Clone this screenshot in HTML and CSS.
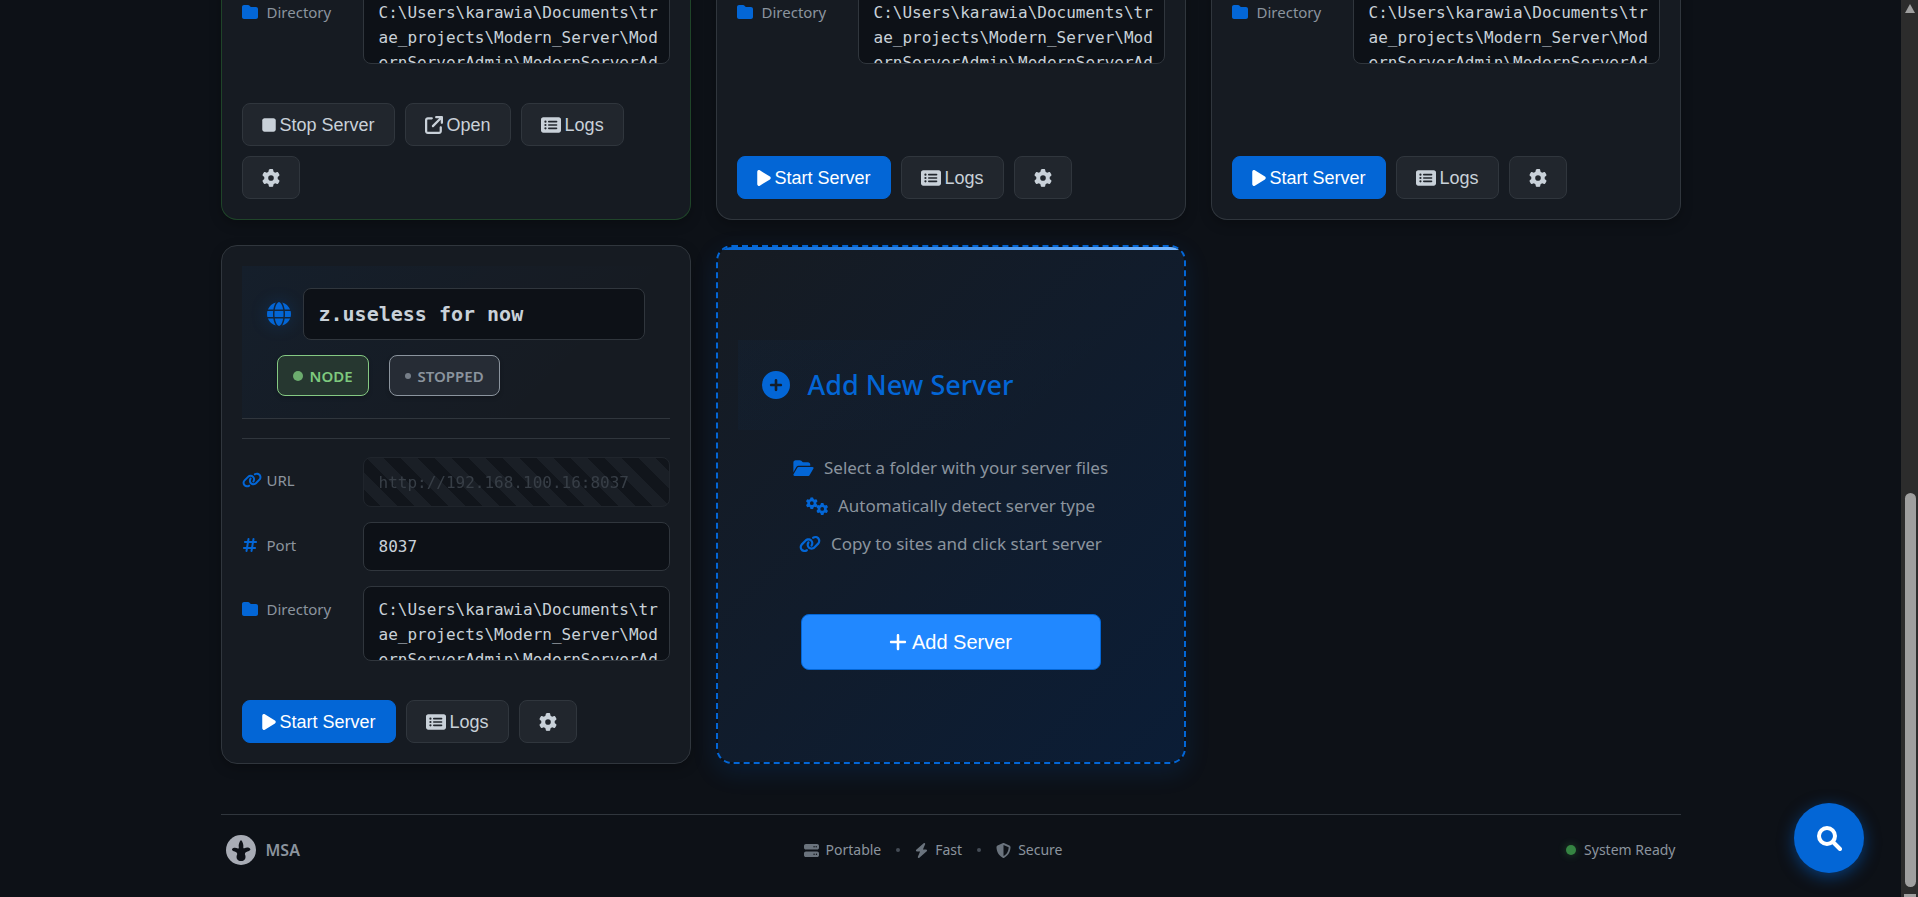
FILE: index.html
```html
<!DOCTYPE html>
<html lang="en">
<head>
<meta charset="utf-8">
<meta name="viewport" content="width=device-width, initial-scale=1">
<title>MSA</title>
<link rel="stylesheet" href="styles.css">
</head>
<body>
<svg class="sprite" aria-hidden="true">
  <symbol id="folder" viewBox="0 0 512 512"><path d="M64 480H448c35.300 0 64-28.700 64-64V160c0-35.300-28.700-64-64-64H288c-10.100 0-19.600-4.700-25.600-12.800L243.200 57.600C231.100 41.500 212.100 32 192 32H64C28.700 32 0 60.700 0 96V416c0 35.300 28.700 64 64 64z"/></symbol>
  <symbol id="folder-open" viewBox="0 0 576 512"><path d="M88.700 223.800L0 375.800V96C0 60.700 28.700 32 64 32H181.500c17 0 33.300 6.700 45.300 18.700l26.500 26.500c12 12 28.300 18.700 45.300 18.700H416c35.300 0 64 28.700 64 64v32H144c-22.800 0-43.800 12.100-55.300 31.800zm27.600 16.100C122.100 230 132.600 224 144 224H544c11.500 0 22 6.100 27.700 16.100s5.700 22.200-.1 32.100l-112 192C453.900 474 443.400 480 432 480H32c-11.500 0-22-6.100-27.700-16.100s-5.700-22.200 .1-32.100l112-192z"/></symbol>
  <symbol id="stop" viewBox="0 0 384 512"><path d="M0 128C0 92.700 28.700 64 64 64H320c35.300 0 64 28.700 64 64V384c0 35.300-28.700 64-64 64H64c-35.300 0-64-28.700-64-64V128z"/></symbol>
  <symbol id="play" viewBox="0 0 384 512"><path d="M73 39c-14.800-9.100-33.400-9.400-48.500-.9S0 62.600 0 80V432c0 17.400 9.400 33.400 24.500 41.900s33.700 8.100 48.500-.9L361 297c14.300-8.700 23-24.200 23-41s-8.700-32.200-23-41L73 39z"/></symbol>
  <symbol id="open" viewBox="0 0 512 512"><path d="M320 0c-17.700 0-32 14.300-32 32s14.300 32 32 32h82.700L201.400 265.400c-12.500 12.500-12.500 32.800 0 45.300s32.800 12.500 45.300 0L448 109.300V192c0 17.700 14.300 32 32 32s32-14.300 32-32V32c0-17.700-14.300-32-32-32H320zM80 32C35.800 32 0 67.800 0 112V432c0 44.200 35.800 80 80 80H400c44.200 0 80-35.800 80-80V320c0-17.700-14.300-32-32-32s-32 14.300-32 32V432c0 8.800-7.200 16-16 16H80c-8.800 0-16-7.200-16-16V112c0-8.800 7.200-16 16-16H192c17.700 0 32-14.300 32-32s-14.300-32-32-32H80z"/></symbol>
  <symbol id="logs" viewBox="0 0 576 512"><path d="M0 96C0 60.700 28.700 32 64 32H512c35.300 0 64 28.700 64 64V416c0 35.300-28.700 64-64 64H64c-35.300 0-64-28.700-64-64V96zM128 288a32 32 0 1 0 0-64 32 32 0 1 0 0 64zm32-128a32 32 0 1 0-64 0 32 32 0 1 0 64 0zM128 384a32 32 0 1 0 0-64 32 32 0 1 0 0 64zm96-248c-13.300 0-24 10.700-24 24s10.700 24 24 24H448c13.300 0 24-10.700 24-24s-10.700-24-24-24H224zm0 96c-13.300 0-24 10.700-24 24s10.700 24 24 24H448c13.300 0 24-10.700 24-24s-10.700-24-24-24H224zm0 96c-13.300 0-24 10.700-24 24s10.700 24 24 24H448c13.300 0 24-10.700 24-24s-10.700-24-24-24H224z"/></symbol>
  <symbol id="gear" viewBox="0 0 512 512"><path d="M495.900 166.600c3.200 8.700 .5 18.400-6.400 24.600l-43.300 39.400c1.100 8.300 1.700 16.800 1.700 25.400s-.6 17.100-1.700 25.400l43.300 39.400c6.900 6.200 9.600 15.900 6.400 24.600c-4.400 11.900-9.700 23.300-15.800 34.300l-4.700 8.100c-6.600 11-14 21.400-22.100 31.200c-5.900 7.200-15.700 9.600-24.500 6.800l-55.700-17.700c-13.400 10.300-28.200 18.900-44 25.400l-12.500 57.100c-2 9.100-9 16.300-18.200 17.800c-13.800 2.300-28 3.500-42.500 3.500s-28.700-1.200-42.500-3.500c-9.200-1.500-16.200-8.700-18.200-17.800l-12.500-57.100c-15.800-6.500-30.600-15.100-44-25.400L83.100 425.900c-8.800 2.800-18.600 .3-24.500-6.800c-8.100-9.800-15.500-20.200-22.100-31.200l-4.700-8.100c-6.100-11-11.400-22.400-15.800-34.300c-3.200-8.700-.5-18.400 6.400-24.600l43.300-39.400C64.600 273.100 64 264.600 64 256s.6-17.100 1.700-25.400L22.400 191.200c-6.900-6.200-9.600-15.900-6.400-24.600c4.400-11.900 9.700-23.300 15.800-34.300l4.700-8.100c6.600-11 14-21.400 22.100-31.200c5.900-7.200 15.700-9.600 24.500-6.800l55.700 17.700c13.400-10.300 28.200-18.900 44-25.400l12.500-57.100c2-9.100 9-16.300 18.200-17.800C227.300 1.200 241.500 0 256 0s28.700 1.200 42.500 3.500c9.200 1.500 16.200 8.700 18.200 17.800l12.500 57.100c15.800 6.500 30.600 15.100 44 25.400l55.700-17.700c8.800-2.800 18.600-.3 24.500 6.800c8.100 9.800 15.500 20.200 22.100 31.200l4.700 8.100c6.100 11 11.400 22.400 15.800 34.300zM256 336a80 80 0 1 0 0-160 80 80 0 1 0 0 160z"/></symbol>
  <symbol id="gears" viewBox="0 0 640 512"><use href="#gear" x="-6" y="0" width="350" height="350"/><use href="#gear" x="296" y="168" width="350" height="350"/></symbol>
  <symbol id="link" viewBox="0 0 640 512"><path d="M579.800 267.700c56.500-56.500 56.500-148 0-204.500c-50-50-128.800-56.500-186.300-15.400l-1.600 1.100c-14.400 10.300-17.700 30.300-7.400 44.600s30.300 17.700 44.600 7.400l1.600-1.100c32.100-22.900 76-19.300 103.800 8.600c31.500 31.500 31.500 82.500 0 114L422.300 334.800c-31.500 31.500-82.500 31.500-114 0c-27.900-27.900-31.500-71.800-8.600-103.800l1.100-1.600c10.300-14.400 6.900-34.400-7.400-44.600s-34.400-6.900-44.600 7.400l-1.100 1.600C206.500 251.200 213 330 263 380c56.500 56.500 148 56.500 204.500 0L579.800 267.700zM60.200 244.300c-56.500 56.500-56.500 148 0 204.500c50 50 128.800 56.500 186.300 15.400l1.600-1.100c14.400-10.300 17.700-30.300 7.400-44.600s-30.300-17.700-44.600-7.400l-1.600 1.100c-32.100 22.900-76 19.300-103.800-8.600C74 372 74 321 105.500 289.500L217.700 177.200c31.500-31.500 82.500-31.500 114 0c27.900 27.900 31.500 71.800 8.600 103.900l-1.100 1.600c-10.300 14.400-6.900 34.400 7.400 44.600s34.400 6.900 44.600-7.400l1.100-1.600C433.500 260.800 427 182 377 132c-56.500-56.500-148-56.500-204.500 0L60.200 244.300z"/></symbol>
  <symbol id="hash" viewBox="-32 0 512 512"><path d="M181.300 32.400c17.400 2.900 29.200 19.400 26.300 36.800L197.800 128h95.100l11.500-69.300c2.900-17.400 19.400-29.200 36.800-26.300s29.200 19.400 26.300 36.800L357.800 128H416c17.700 0 32 14.300 32 32s-14.300 32-32 32H347.100L325.800 320H384c17.700 0 32 14.300 32 32s-14.300 32-32 32H315.100l-11.500 69.300c-2.900 17.400-19.400 29.200-36.800 26.300s-29.200-19.400-26.300-36.800l9.800-58.700H155.100l-11.500 69.300c-2.900 17.400-19.400 29.200-36.800 26.300s-29.200-19.400-26.300-36.800L90.200 384H32c-17.700 0-32-14.300-32-32s14.300-32 32-32h68.900l21.300-128H64c-17.700 0-32-14.300-32-32s14.300-32 32-32h68.900l11.500-69.300c2.900-17.400 19.400-29.200 36.800-26.300zM187.100 192L165.800 320h95.100l21.300-128H187.100z"/></symbol>
  <symbol id="globe" viewBox="0 0 512 512"><path d="M352 256c0 22.200-1.200 43.600-3.300 64H163.300c-2.200-20.400-3.300-41.800-3.300-64s1.200-43.600 3.300-64H348.700c2.200 20.400 3.300 41.800 3.300 64zm28.800-64H503.900c5.300 20.500 8.100 41.900 8.100 64s-2.800 43.500-8.100 64H380.800c2.100-20.600 3.200-42 3.200-64s-1.100-43.400-3.200-64zm112.600-32H376.700c-10-63.900-29.800-117.400-55.300-151.600c78.300 20.700 142 77.500 171.900 151.600zm-149.100 0H167.700c6.100-36.400 15.500-68.600 27-94.700c10.500-23.600 22.200-40.700 33.500-51.500C239.400 3.200 248.700 0 256 0s16.600 3.200 27.800 13.800c11.300 10.800 23 27.900 33.500 51.500c11.600 26 20.900 58.200 27 94.700zm-209 0H18.600C48.600 85.900 112.200 29.100 190.600 8.400C165.100 42.600 145.300 96.100 135.300 160zM8.100 192H131.200c-2.100 20.600-3.200 42-3.200 64s1.100 43.400 3.200 64H8.100C2.800 299.500 0 278.100 0 256s2.800-43.500 8.100-64zM194.700 446.600c-11.600-26-20.900-58.200-27-94.600H344.300c-6.100 36.400-15.500 68.600-27 94.600c-10.500 23.600-22.200 40.700-33.500 51.500C272.600 508.800 263.300 512 256 512s-16.600-3.200-27.800-13.800c-11.300-10.800-23-27.900-33.500-51.500zM135.300 352c10 63.900 29.800 117.400 55.300 151.600C112.200 482.900 48.600 426.100 18.600 352H135.300zm358.100 0c-30 74.100-93.600 130.900-171.900 151.600c25.500-34.200 45.200-87.700 55.300-151.600H493.400z"/></symbol>
  <symbol id="plus-circle" viewBox="0 0 512 512"><path d="M256 512A256 256 0 1 0 256 0a256 256 0 1 0 0 512zM232 344V280H168c-13.300 0-24-10.700-24-24s10.700-24 24-24h64V168c0-13.300 10.700-24 24-24s24 10.700 24 24v64h64c13.300 0 24 10.700 24 24s-10.700 24-24 24H280v64c0 13.300-10.700 24-24 24s-24-10.700-24-24z"/></symbol>
  <symbol id="plus" viewBox="0 0 448 512"><path d="M256 80c0-17.700-14.300-32-32-32s-32 14.300-32 32V224H48c-17.700 0-32 14.300-32 32s14.300 32 32 32H192V432c0 17.700 14.300 32 32 32s32-14.300 32-32V288H400c17.700 0 32-14.300 32-32s-14.300-32-32-32H256V80z"/></symbol>
  <symbol id="server" viewBox="0 0 512 512"><path d="M64 32C28.700 32 0 60.700 0 96v64c0 35.300 28.700 64 64 64H448c35.300 0 64-28.700 64-64V96c0-35.300-28.700-64-64-64H64zm280 72a24 24 0 1 1 0 48 24 24 0 1 1 0-48zm48 24a24 24 0 1 1 48 0 24 24 0 1 1-48 0zM64 288c-35.300 0-64 28.700-64 64v64c0 35.300 28.700 64 64 64H448c35.300 0 64-28.700 64-64V352c0-35.300-28.700-64-64-64H64zm280 72a24 24 0 1 1 0 48 24 24 0 1 1 0-48zm56 24a24 24 0 1 1 48 0 24 24 0 1 1-48 0z"/></symbol>
  <symbol id="bolt" viewBox="0 0 448 512"><path d="M349.400 44.600c5.900-13.700 1.500-29.700-10.600-38.500s-28.600-8-39.900 1.800l-256 224c-10 8.800-13.600 22.900-8.900 35.300S50.700 288 64 288H175.500L98.600 467.400c-5.900 13.700-1.500 29.700 10.600 38.500s28.600 8 39.900-1.800l256-224c10-8.800 13.600-22.900 8.900-35.300s-16.600-20.700-30-20.700H272.500L349.400 44.600z"/></symbol>
  <symbol id="shield" viewBox="0 0 512 512"><path d="M256 0c4.600 0 9.200 1 13.400 2.900L457.700 82.800c22 9.300 38.400 31 38.300 57.200c-.5 99.200-41.300 280.700-213.600 363.200c-16.700 8-36.100 8-52.800 0C57.300 420.700 16.500 239.200 16 140c-.1-26.200 16.300-47.900 38.300-57.200L242.700 2.900C246.800 1 251.400 0 256 0zm0 66.800V444.800C394 378 431.100 230.100 432 141.400L256 66.800z"/></symbol>
</svg>

<div class="page">
  <main class="grid">
    <article class="card card--running card--continued">
      <div class="fields">
        <div class="field">
          <label for="dir1"><svg class="icon"><use href="#folder"/></svg>Directory</label>
          <textarea id="dir1" readonly>C:\Users\karawia\Documents\tr
ae_projects\Modern_Server\Mod
ernServerAdmin\ModernServerAd</textarea>
        </div>
      </div>
      <div class="actions">
        <button class="btn" type="button"><svg class="i-narrow"><use href="#stop"/></svg>Stop Server</button>
        <button class="btn" type="button"><svg class="i-square"><use href="#open"/></svg>Open</button>
        <button class="btn" type="button"><svg class="i-wide"><use href="#logs"/></svg>Logs</button>
        <button class="btn" type="button" aria-label="Settings"><svg class="i-square"><use href="#gear"/></svg></button>
      </div>
    </article>

    <article class="card card--continued">
      <div class="fields">
        <div class="field">
          <label for="dir2"><svg class="icon"><use href="#folder"/></svg>Directory</label>
          <textarea id="dir2" readonly>C:\Users\karawia\Documents\tr
ae_projects\Modern_Server\Mod
ernServerAdmin\ModernServerAd</textarea>
        </div>
      </div>
      <div class="actions">
        <button class="btn btn--primary" type="button"><svg class="i-narrow"><use href="#play"/></svg>Start Server</button>
        <button class="btn" type="button"><svg class="i-wide"><use href="#logs"/></svg>Logs</button>
        <button class="btn" type="button" aria-label="Settings"><svg class="i-square"><use href="#gear"/></svg></button>
      </div>
    </article>

    <article class="card card--continued">
      <div class="fields">
        <div class="field">
          <label for="dir3"><svg class="icon"><use href="#folder"/></svg>Directory</label>
          <textarea id="dir3" readonly>C:\Users\karawia\Documents\tr
ae_projects\Modern_Server\Mod
ernServerAdmin\ModernServerAd</textarea>
        </div>
      </div>
      <div class="actions">
        <button class="btn btn--primary" type="button"><svg class="i-narrow"><use href="#play"/></svg>Start Server</button>
        <button class="btn" type="button"><svg class="i-wide"><use href="#logs"/></svg>Logs</button>
        <button class="btn" type="button" aria-label="Settings"><svg class="i-square"><use href="#gear"/></svg></button>
      </div>
    </article>

    <article class="card">
      <header class="card-head">
        <div class="name-row">
          <svg class="globe"><use href="#globe"/></svg>
          <input class="name" type="text" value="z.useless for now" aria-label="Server name">
        </div>
        <div class="badges">
          <span class="badge badge--node"><i class="dot"></i>NODE</span>
          <span class="badge badge--stopped"><i class="dot dot--small"></i>STOPPED</span>
        </div>
      </header>
      <div class="fields fields--ruled">
        <div class="field">
          <label for="url4"><svg class="icon icon--link"><use href="#link"/></svg>URL</label>
          <input id="url4" class="striped" type="text" value="http://192.168.100.16:8037" disabled>
        </div>
        <div class="field">
          <label for="port4"><svg class="icon"><use href="#hash"/></svg>Port</label>
          <input id="port4" type="text" value="8037">
        </div>
        <div class="field">
          <label for="dir4"><svg class="icon"><use href="#folder"/></svg>Directory</label>
          <textarea id="dir4" readonly>C:\Users\karawia\Documents\tr
ae_projects\Modern_Server\Mod
ernServerAdmin\ModernServerAd</textarea>
        </div>
      </div>
      <div class="actions">
        <button class="btn btn--primary" type="button"><svg class="i-narrow"><use href="#play"/></svg>Start Server</button>
        <button class="btn" type="button"><svg class="i-wide"><use href="#logs"/></svg>Logs</button>
        <button class="btn" type="button" aria-label="Settings"><svg class="i-square"><use href="#gear"/></svg></button>
      </div>
    </article>

    <article class="card card--add">
      <header class="add-head">
        <svg><use href="#plus-circle"/></svg>
        <h2>Add New Server</h2>
      </header>
      <ul class="steps">
        <li><svg class="i-folder"><use href="#folder-open"/></svg>Select a folder with your server files</li>
        <li><svg class="i-gears"><use href="#gears"/></svg>Automatically detect server type</li>
        <li><svg class="i-gears"><use href="#link"/></svg>Copy to sites and click start server</li>
      </ul>
      <button class="add-btn" type="button"><svg><use href="#plus"/></svg>Add Server</button>
    </article>
  </main>

  <footer class="footer">
    <div class="brand">
      <svg viewBox="0 0 30 30"><circle cx="15" cy="15" r="15" fill="#a8acb5"/><path fill="#0d1117" d="M15 5c1.800 2 2.700 4.600 2.300 7.400 0 .7.300 1.100 1 .9 1.600-.8 3.400-.9 4.900-.4.900.3 1.200 1.200 1.200 1.900-.4.900-1.700 1.300-3 1.700-1.600.5-2.500 1.300-2.500 2.700 1.600 3.300.2 6.800-3.800 6.800s-5.500-3.300-3.900-6.800c0-1.400-.9-2.200-2.500-2.700-1.300-.4-2.600-.8-2.700-1.700 0-.8.500-1.600 1.400-1.900 1.500-.4 3.100-.2 4.500.6.700.3 1-.4.900-1.100C12.300 9.600 13.200 7 15 5z"/></svg>
      <span>MSA</span>
    </div>
    <div class="traits">
      <span><svg><use href="#server"/></svg>Portable</span>
      <i class="sep"></i>
      <span><svg class="thin"><use href="#bolt"/></svg>Fast</span>
      <i class="sep"></i>
      <span><svg><use href="#shield"/></svg>Secure</span>
    </div>
    <div class="status"><i class="dot"></i>System Ready</div>
  </footer>
</div>

<button class="search" type="button" aria-label="Search"><svg viewBox="0 0 26 26"><circle cx="11" cy="11" r="8"/><path d="M17 17l7 7"/></svg></button>
<div class="scrollbar" aria-hidden="true"><i class="arrow"></i><i class="thumb"></i><i class="cap"></i></div>
</body>
</html>
```
FILE: styles.css
```css
:root {
  --bg: #0d1117;
  --card: #161b22;
  --line: #30363d;
  --text: #c9d1d9;
  --muted: #8b949e;
  --blue: #0366d6;
  --ui: "Noto Sans", "Open Sans", sans-serif;
  --mono: "DejaVu Sans Mono", monospace;
}

* { box-sizing: border-box; }

body {
  margin: 0;
  background: var(--bg);
  color: var(--text);
  font: 15px/24px var(--ui);
}

svg { fill: currentColor; flex: none; }
.sprite { position: absolute; width: 0; height: 0; }

.page {
  height: 100vh;
  overflow: hidden;
  display: flex;
  flex-direction: column;
  justify-content: flex-end;
  align-items: center;
  padding: 0 37px 0 20px;
}

.grid, .footer { width: 100%; max-width: 1460px; flex: none; }

.grid {
  display: grid;
  grid-template-columns: repeat(3, minmax(0, 1fr));
  gap: 25px;
}

/* Cards */
.card {
  display: flex;
  flex-direction: column;
  padding: 20px;
  background: var(--card);
  border: 1px solid var(--line);
  border-radius: 16px;
  box-shadow: 0 4px 12px rgba(0, 0, 0, .25);
}
.card--running { border-color: #1f4429; }
.card--continued { border-top: 0; border-radius: 0 0 16px 16px; padding-top: 0; }

.card-head {
  display: flex;
  flex-direction: column;
  gap: 15px;
  padding: 22px 25px;
  margin-bottom: 19px;
  border-bottom: 1px solid var(--line);
  background: linear-gradient(135deg, rgba(3, 102, 214, .05), rgba(3, 102, 214, 0) 75%);
}
.name-row { display: flex; align-items: center; gap: 12px; }
.globe {
  width: 24px;
  height: 24px;
  color: var(--blue);
  filter: drop-shadow(0 0 8px rgba(3, 102, 214, .3));
}

input, textarea {
  display: block;
  width: 100%;
  min-width: 0;
  padding: 0 15px;
  background: var(--bg);
  border: 1px solid var(--line);
  border-radius: 8px;
  color: var(--text);
  font: 16px/25px var(--mono);
}
input { height: 49px; }
textarea {
  height: 75px;
  padding: 10px 0 0 15px;
  overflow: hidden;
  resize: none;
  white-space: pre;
}
.name { height: 52px; font-size: 20px; font-weight: 700; }
.striped {
  height: 50px;
  opacity: .4;
  color: #6a737d;
  background: repeating-linear-gradient(45deg, #0a0d12 0 12px, #21262d 12px 24px);
}

.badges { display: flex; gap: 20px; padding-left: 10px; }
.badge {
  display: flex;
  align-items: center;
  gap: 7px;
  height: 41px;
  padding: 0 15px;
  border: 1px solid;
  border-radius: 8px;
  font-size: 15px;
  font-weight: 600;
  box-shadow: 0 2px 4px rgba(0, 0, 0, .2);
}
.badge--node { color: #7ec97e; background: #263730; border-color: #85c983; }
.badge--stopped { color: var(--muted); background: #262c35; }
.dot { width: 10px; height: 10px; border-radius: 50%; background: currentColor; opacity: .8; }
.dot--small { width: 6px; height: 6px; }

.fields { display: grid; gap: 15px; margin-bottom: 39px; }
.fields--ruled { padding-top: 18px; border-top: 1px solid var(--line); }
.field {
  display: grid;
  grid-template-columns: 111px minmax(0, 1fr);
  gap: 10px;
  align-items: start;
}
.field label {
  display: flex;
  align-items: center;
  gap: 9px;
  height: 46px;
  color: var(--muted);
}
.icon { width: 16px; height: 16px; color: var(--blue); }
.icon--link { width: 20px; margin-right: -4px; }

.actions { display: flex; flex-wrap: wrap; gap: 10px; margin-top: auto; }
.btn {
  display: flex;
  align-items: center;
  gap: 4px;
  height: 43px;
  padding: 0 19px;
  background: #21262d;
  border: 1px solid var(--line);
  border-radius: 8px;
  color: var(--text);
  font: 18px/24px "Liberation Sans", sans-serif;
}
.btn--primary { background: var(--blue); border-color: var(--blue); color: #fff; }
.i-narrow { width: 14px; height: 18px; }
.i-square { width: 18px; height: 18px; }
.i-wide { width: 20px; height: 18px; }

/* Add card */
.card--add {
  position: relative;
  justify-content: center;
  align-items: center;
  overflow: hidden;
  border: 2px dashed var(--blue);
  background: linear-gradient(135deg, #161b22, #0b1d36) padding-box;
  box-shadow: 0 8px 24px rgba(3, 102, 214, .15);
}
.card--add::before {
  content: "";
  position: absolute;
  inset: 0 0 auto;
  height: 3px;
  background: linear-gradient(90deg, #0366d6, #79b8ff);
}
.add-head {
  display: flex;
  align-items: center;
  gap: 18px;
  width: 100%;
  height: 90px;
  padding: 0 24px;
  color: var(--blue);
  background: linear-gradient(135deg, rgba(3, 102, 214, .04), rgba(3, 102, 214, 0) 75%);
}
.add-head svg { width: 28px; height: 28px; }
.add-head h2 { margin: 0; font-size: 27px; line-height: 36px; font-weight: 500; }
.steps {
  display: grid;
  gap: 10px;
  justify-items: center;
  margin: 24px 0 56px;
  padding: 0;
  list-style: none;
  color: var(--muted);
  font-size: 17px;
  line-height: 28px;
}
.steps li { display: flex; align-items: center; gap: 10px; }
.steps svg { height: 18px; color: var(--blue); }
.i-folder { width: 21px; }
.i-gears { width: 22px; }
.add-btn {
  display: flex;
  align-items: center;
  justify-content: center;
  gap: 5px;
  width: 300px;
  height: 56px;
  background: #2188ff;
  border: 1px solid var(--blue);
  border-radius: 8px;
  color: #fff;
  font: 20px/28px "Liberation Sans", sans-serif;
}
.add-btn svg { width: 18px; height: 20px; }

/* Footer */
.footer {
  display: flex;
  justify-content: space-between;
  align-items: center;
  margin-top: 50px;
  padding: 20px 5px 32px;
  border-top: 1px solid var(--line);
  color: var(--muted);
  font-size: 14px;
}
.brand { display: flex; align-items: center; gap: 10px; font-weight: 600; font-size: 16px; }
.brand svg { width: 30px; height: 30px; }
.traits { display: flex; align-items: center; gap: 15px; }
.traits span { display: flex; align-items: center; gap: 7px; }
.traits svg { width: 15px; height: 15px; color: #6a737d; }
.traits .thin { width: 13px; }
.sep { width: 4px; height: 4px; border-radius: 50%; background: #444c56; }
.status { display: flex; align-items: center; gap: 8px; }
.status .dot { background: #3fa34d; box-shadow: 0 0 8px rgba(63, 163, 77, .5); }

/* Overlays */
.search {
  position: fixed;
  right: 54px;
  bottom: 24px;
  display: grid;
  place-items: center;
  width: 70px;
  height: 70px;
  padding: 0;
  border: 0;
  border-radius: 50%;
  background: var(--blue);
  color: #fff;
  box-shadow: 0 4px 16px rgba(3, 102, 214, .5);
}
.search svg {
  width: 26px;
  height: 26px;
  fill: none;
  stroke: currentColor;
  stroke-width: 4;
  stroke-linecap: round;
}
.scrollbar {
  position: fixed;
  inset: 0 0 0 auto;
  width: 17px;
  background: #2c2c2c;
}
.arrow {
  position: absolute;
  top: 4px;
  left: 4px;
  border: 5px solid transparent;
  border-top: 0;
  border-bottom: 9px solid #9f9f9f;
}
.thumb {
  position: absolute;
  top: 55%;
  bottom: 10px;
  left: 4px;
  width: 11px;
  border-radius: 6px;
  background: #9f9f9f;
}
.cap {
  position: absolute;
  bottom: 0;
  left: 3px;
  width: 12px;
  height: 3px;
  background: #9f9f9f;
}
```
